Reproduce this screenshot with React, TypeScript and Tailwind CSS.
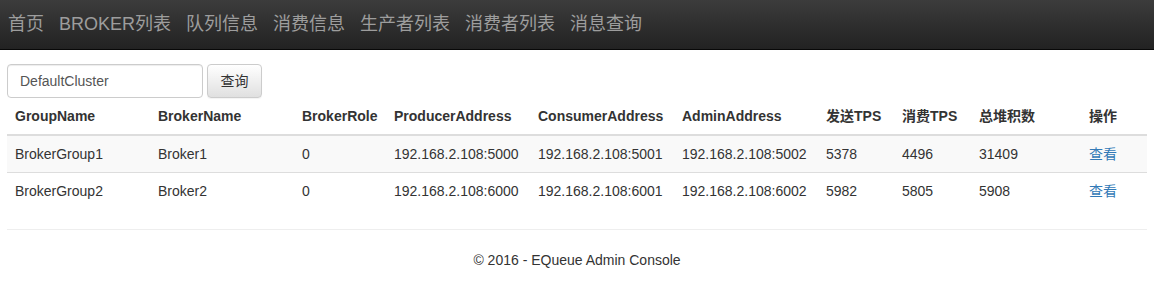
import React from 'react';

const navItems = ['首页', 'BROKER列表', '队列信息', '消费信息', '生产者列表', '消费者列表', '消息查询'];

interface BrokerRow {
  group: string;
  name: string;
  role: string;
  producer: string;
  consumer: string;
  admin: string;
  sendTps: string;
  consumeTps: string;
  backlog: string;
}

const rows: BrokerRow[] = [
  {
    group: 'BrokerGroup1',
    name: 'Broker1',
    role: '0',
    producer: '192.168.2.108:5000',
    consumer: '192.168.2.108:5001',
    admin: '192.168.2.108:5002',
    sendTps: '5378',
    consumeTps: '4496',
    backlog: '31409',
  },
  {
    group: 'BrokerGroup2',
    name: 'Broker2',
    role: '0',
    producer: '192.168.2.108:6000',
    consumer: '192.168.2.108:6001',
    admin: '192.168.2.108:6002',
    sendTps: '5982',
    consumeTps: '5805',
    backlog: '5908',
  },
];

const headers = [
  { label: 'GroupName', w: 'w-[143px]' },
  { label: 'BrokerName', w: 'w-[144px]' },
  { label: 'BrokerRole', w: 'w-[92px]' },
  { label: 'ProducerAddress', w: 'w-[144px]' },
  { label: 'ConsumerAddress', w: 'w-[144px]' },
  { label: 'AdminAddress', w: 'w-[144px]' },
  { label: '发送TPS', w: 'w-[76px]' },
  { label: '消费TPS', w: 'w-[77px]' },
  { label: '总堆积数', w: 'w-[110px]' },
  { label: '操作', w: 'w-[66px]' },
];

export default function App() {
  return (
    <div className="min-h-[304px] bg-white text-[14px] leading-[20px] text-[#333] font-['Liberation_Sans','Noto_Sans_CJK_SC',sans-serif]">
      <nav className="h-[50px] bg-gradient-to-b from-[#3c3c3c] to-[#222] border-b border-[#080808] flex items-center gap-[15px] pl-[8px] pb-[2px]">
        {navItems.map((item) => (
          <a key={item} className="text-[18px] leading-[20px] text-[#9d9d9d]">
            {item}
          </a>
        ))}
      </nav>

      <div className="px-[7px] pt-[14px]">
        <div className="flex gap-[4px]">
          <input
            readOnly
            value="DefaultCluster"
            className="w-[196px] h-[34px] px-[12px] border border-[#ccc] rounded-[4px] text-[#555] text-[14px] shadow-[inset_0_1px_1px_rgba(0,0,0,0.075)] outline-none"
          />
          <button className="w-[55px] h-[34px] border border-[#ccc] rounded-[4px] bg-gradient-to-b from-white to-[#e0e0e0] text-[#333] text-[14px] shadow-[0_1px_1px_rgba(0,0,0,0.05)]">
            查询
          </button>
        </div>

        <table className="w-full table-fixed border-collapse">
          <thead>
            <tr>
              {headers.map((h) => (
                <th key={h.label} className={`${h.w} text-left font-bold p-[8px] border-b-2 border-[#ddd] whitespace-nowrap`}>
                  {h.label}
                </th>
              ))}
            </tr>
          </thead>
          <tbody>
            {rows.map((r, i) => {
              const td = `p-[8px] whitespace-nowrap ${i > 0 ? 'border-t border-[#ddd]' : ''}`;
              return (
                <tr key={r.group} className={i % 2 === 0 ? 'bg-[#f9f9f9]' : ''}>
                  <td className={td}>{r.group}</td>
                  <td className={td}>{r.name}</td>
                  <td className={td}>{r.role}</td>
                  <td className={td}>{r.producer}</td>
                  <td className={td}>{r.consumer}</td>
                  <td className={td}>{r.admin}</td>
                  <td className={td}>{r.sendTps}</td>
                  <td className={td}>{r.consumeTps}</td>
                  <td className={td}>{r.backlog}</td>
                  <td className={td}>
                    <a className="text-[#337ab7]">查看</a>
                  </td>
                </tr>
              );
            })}
          </tbody>
        </table>

        <hr className="mt-[20px] mb-[20px] border-0 border-t border-[#eee]" />
        <footer className="text-center text-[14px] leading-[20px]">© 2016 - EQueue Admin Console</footer>
      </div>
    </div>
  );
}
